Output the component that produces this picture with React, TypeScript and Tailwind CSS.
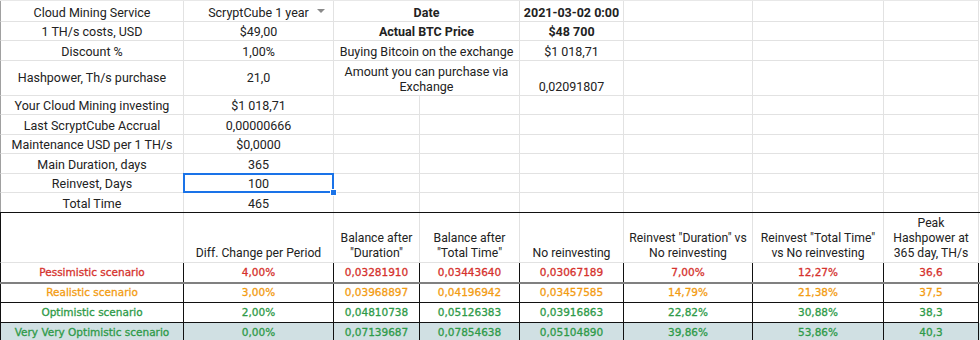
const cols = "grid grid-cols-[184px_150px_86px_100px_104px_129px_131px_95px]";

type CellProps = {
  children?: React.ReactNode;
  className?: string;
  middle?: boolean;
  wrap?: boolean;
  clip?: boolean;
};

function Cell({ children, className = "", middle = false, wrap = false, clip = true }: CellProps) {
  return (
    <div
      className={`flex justify-center border-r border-b border-[#e2e2e2] px-1 pb-[1px] leading-[15px] ${middle ? "items-center" : "items-end"} ${wrap ? "whitespace-pre text-center" : "whitespace-nowrap"} ${clip ? "overflow-hidden" : "overflow-visible"} ${className}`}
    >
      {children}
    </div>
  );
}

const topRows: { label: string; value: React.ReactNode; h: string; c?: React.ReactNode; e?: React.ReactNode; bold?: boolean; mid?: boolean }[] = [
  { label: "Cloud Mining Service", value: "ScryptCube 1 year", h: "h-[21px]", c: "Date", e: "2021-03-02 0:00", bold: true },
  { label: "1 TH/s costs, USD", value: "$49,00", h: "h-[19px]", c: "Actual BTC Price", e: "$48 700", bold: true },
  { label: "Discount %", value: "1,00%", h: "h-[20px]", c: "Buying Bitcoin on the exchange", e: "$1 018,71" },
  { label: "Hashpower, Th/s purchase", value: "21,0", h: "h-[35px]", c: "Amount you can purchase via\nExchange", e: "0,02091807", mid: true },
  { label: "Your Cloud Mining investing", value: "$1 018,71", h: "h-[19px]" },
  { label: "Last ScryptCube Accrual", value: "0,00000666", h: "h-[20px]" },
  { label: "Maintenance USD per 1 TH/s", value: "$0,0000", h: "h-[19px]" },
  { label: "Main Duration, days", value: "365", h: "h-[20px]" },
  { label: "Reinvest, Days", value: "100", h: "h-[19px]" },
  { label: "Total Time", value: "465", h: "h-[19px]" },
];

const headers = [
  "",
  "Diff. Change per Period",
  "Balance after\n\"Duration\"",
  "Balance after\n\"Total Time\"",
  "No reinvesting",
  "Reinvest \"Duration\" vs\nNo reinvesting",
  "Reinvest \"Total Time\"\nvs No reinvesting",
  "Peak\nHashpower at\n365 day, TH/s",
];

const scenarios = [
  { cells: ["Pessimistic scenario", "4,00%", "0,03281910", "0,03443640", "0,03067189", "7,00%", "12,27%", "36,6"], color: "text-[#d5322d]", row: "h-[21px] border-b-2 border-b-[#808080]" },
  { cells: ["Realistic scenario", "3,00%", "0,03968897", "0,04196942", "0,03457585", "14,79%", "21,38%", "37,5"], color: "text-[#f39c12]", row: "h-[19px]" },
  { cells: ["Optimistic scenario", "2,00%", "0,04810738", "0,05126383", "0,03916863", "22,82%", "30,88%", "38,3"], color: "text-[#2e9a48]", row: "h-[20px]" },
  { cells: ["Very Very Optimistic scenario", "0,00%", "0,07139687", "0,07854638", "0,05104890", "39,86%", "53,86%", "40,3"], color: "text-[#2e9a48] bg-[#d0e0e3]", row: "h-[20px]" },
];

export default function App() {
  return (
    <div className="h-[340px] w-[980px] overflow-hidden bg-white font-['Roboto',sans-serif] text-[12.5px] text-[#222]">
      <div className="border-t border-[#e8e8e8]">
        {topRows.map((r, i) => {
          const last = i === 9 ? "border-b-0" : "";
          return (
            <div key={i} className={`${cols} ${r.h}`}>
              <Cell middle={r.mid} className={`border-l border-l-[#a0a0a0] ${last}`}>
                {r.label}
              </Cell>
              <Cell middle={r.mid} clip={i !== 8} className={`relative ${last}`}>
                {r.value}
                {i === 0 && (
                  <span className="absolute right-[8px] top-[8px] h-0 w-0 border-x-[4px] border-t-[4px] border-x-transparent border-t-[#8a8a8a]" />
                )}
                {i === 8 && (
                  <>
                    <span className="absolute inset-[-1px] border-2 border-[#1a73e8]" />
                    <span className="absolute right-[-4px] bottom-[-4px] z-10 h-[7px] w-[7px] border border-white bg-[#1a73e8]" />
                  </>
                )}
              </Cell>
              {r.c ? (
                <Cell wrap={r.mid} className={`col-span-2 ${r.bold ? "font-bold" : ""} ${r.mid ? "leading-[14px]" : ""}`}>
                  {r.c}
                </Cell>
              ) : (
                <>
                  <Cell className={last} />
                  <Cell className={last} />
                </>
              )}
              <Cell className={`${r.bold ? "font-bold" : ""} ${last}`}>{r.e}</Cell>
              <Cell className={last} />
              <Cell className={last} />
              <Cell className={last} />
            </div>
          );
        })}
      </div>

      <div className="border-t border-[#111]">
        <div className={`${cols} h-[50px] text-[12.2px]`}>
          {headers.map((h, i) => (
            <Cell key={i} wrap className={`px-0 border-[#111] ${i === 0 ? "border-l border-l-[#111]" : ""}`}>
              {h}
            </Cell>
          ))}
        </div>
        {scenarios.map((s, i) => (
          <div key={i} className={`${cols} ${s.row} ${s.color} font-['DejaVu_Sans',sans-serif] text-[10.5px] [-webkit-text-stroke:0.3px]`}>
            {s.cells.map((c, j) => (
              <Cell key={j} className={`border-r-[#111] ${i === 0 ? "border-b-0" : "border-b-[#111]"} ${j === 0 ? "border-l border-l-[#111]" : ""} pb-[2px]`}>
                {c}
              </Cell>
            ))}
          </div>
        ))}
      </div>
    </div>
  );
}
